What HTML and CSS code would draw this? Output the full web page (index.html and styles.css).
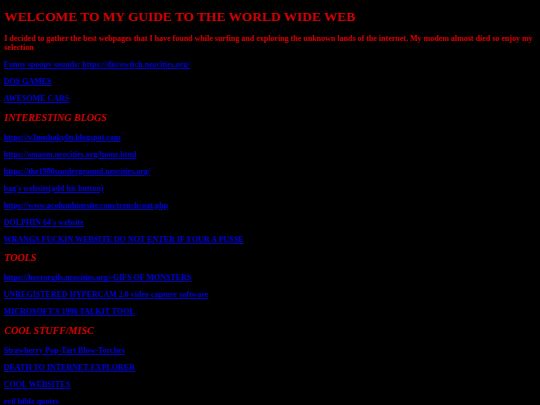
FILE: index.html
```html
<!DOCTYPE html>
<html>
<head>
<meta charset="utf-8">
<link rel="stylesheet" href="styles.css">
</head>
<body class="page">
<h1 class="title">WELCOME TO MY GUIDE TO THE WORLD WIDE WEB</h1>
<p class="intro">I decided to gather the best webpages that I have found while surfing and exploring the unknown lands of the internet. My modem almost died so enjoy my selection</p>
<p class="item"><a class="link" href="#">Funny spoopy sounds: https://discowitch.neocities.org/</a></p>
<p class="item"><a class="link" href="#">DOS GAMES</a></p>
<p class="item"><a class="link" href="#">AWESOME CARS</a></p>
<h2 class="section">INTERESTING BLOGS</h2>
<p class="item"><a class="link" href="#">https://v3nushaky0n.blogspot.com</a></p>
<p class="item"><a class="link" href="#">https://smaom.neocities.org/home.html</a></p>
<p class="item"><a class="link" href="#">https://the1980sunderground.neocities.org/</a></p>
<p class="item"><a class="link" href="#">bag's website(add his button)</a></p>
<p class="item"><a class="link" href="#">https://www.acolumbinesite.com/trenchcoat.php</a></p>
<p class="item"><a class="link" href="#">DOLPHIN 64's website</a></p>
<p class="item"><a class="link" href="#">WRANGS FUCKIN WEBSITE DO NOT ENTER IF YOUR A PUSSE</a></p>
<h2 class="section">TOOLS</h2>
<p class="item"><a class="link" href="#">https://horrorgifs.neocities.org/-GIFS OF MONSTERS</a></p>
<p class="item"><a class="link" href="#">UNREGISTERED HYPERCAM 2.0 video capture software</a></p>
<p class="item"><a class="link" href="#">MICROSOFT'S 1996 TALKIT TOOL</a></p>
<h2 class="section">COOL STUFF/MISC</h2>
<p class="item"><a class="link" href="#">Strawberry Pop-Tart Blow-Torches</a></p>
<p class="item"><a class="link" href="#">DEATH TO INTERNET EXPLORER</a></p>
<p class="item"><a class="link" href="#">COOL WEBSITES</a></p>
<p class="item"><a class="link" href="#">evil bible quotes</a></p>
</body>
</html>
```
FILE: styles.css
```css
html { background: #000; }
.page {
  margin: 0;
  padding: 4px;
  background: #000;
  font-family: "Liberation Serif", "Times New Roman", serif;
  font-weight: bold;
  font-size: 8px;
  color: #d00000;
}
.title {
  font-size: 13.4px;
  line-height: 1.15;
  margin: 4.5px 0 10px;
  color: #d00000;
}
.intro {
  font-size: 8px;
  margin: 0 0 8px;
  line-height: 1.15;
}
.item {
  margin: 7.9px 0;
  line-height: 1.15;
}
.link {
  color: #0000cc;
  text-decoration: underline;
}
.section {
  font-size: 10px;
  line-height: 1.15;
  font-style: italic;
  margin: 8px 0 9.5px;
  color: #d00000;
}
```
